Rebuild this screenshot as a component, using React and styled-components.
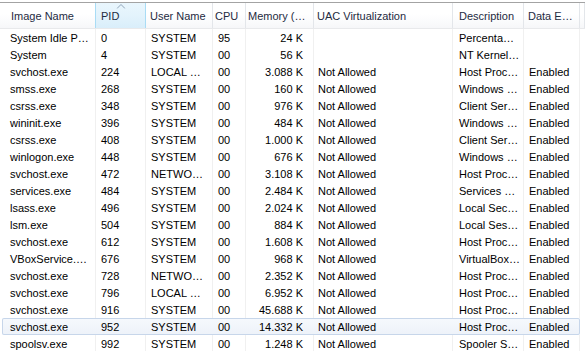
import React from "react";
import styled, { createGlobalStyle } from "styled-components";

const Global = createGlobalStyle`
  html, body { margin: 0; padding: 0; background: #fff; }
  body { font-family: "Liberation Sans", Arial, sans-serif; }
`;

const COLS = "96px 50px 67px 33px 68px 139px 71px 56px 1fr";

const Frame = styled.div`
  width: 585px;
  height: 351px;
  overflow: hidden;
  padding-top: 2px;
  box-sizing: border-box;
  background: #fff;
`;

const List = styled.div`
  border-top: 1px solid #a3a3a3;
  display: flex;
  flex-direction: column;
`;

const HeaderRow = styled.div`
  display: grid;
  grid-template-columns: ${COLS};
  height: 26px;
  background: linear-gradient(#ffffff 0%, #ffffff 45%, #f6f7f9 100%);
  border-bottom: 1px solid #e8e9eb;
  box-sizing: border-box;
`;

const HeaderCell = styled.div`
  position: relative;
  display: flex;
  align-items: center;
  padding-left: ${(p) => p.$pad ?? 5}px;
  font-size: 11px;
  color: #1e2b3f;
  white-space: nowrap;
  overflow: hidden;
  border-right: 1px solid ${(p) => (p.$sorted ? "#a9dcf5" : "#e3e6ea")};
  background: ${(p) =>
    p.$sorted ? "linear-gradient(#e9f6fd 0%, #e3f3fc 50%, #d9eefa 100%)" : "transparent"};
  ${(p) => (p.$sorted ? "margin-left: -1px; border-left: 1px solid #a9dcf5;" : "")}
`;

const SortArrow = styled.svg`
  position: absolute;
  top: 1px;
  left: 50%;
  transform: translateX(-50%);
`;

const Row = styled.div`
  display: grid;
  grid-template-columns: ${COLS};
  height: 17px;
  ${(p) =>
    p.$focused
      ? `
    background: linear-gradient(#f6f9fd, #edf2f9);
    box-shadow: inset 0 0 0 1px #c7d6ea;
    border-radius: 2px;
    margin: 0 5px 0 2px;
    grid-template-columns: 94px 50px 67px 33px 68px 139px 71px 56px 1fr;
  `
      : ""}
`;

const Cell = styled.div`
  display: flex;
  align-items: center;
  justify-content: ${(p) => (p.$right ? "flex-end" : "flex-start")};
  padding-left: ${(p) => (p.$right ? 0 : p.$pad ?? 5)}px;
  padding-right: ${(p) => (p.$right ? 10 : 0)}px;
  font-size: 11px;
  color: #000;
  white-space: nowrap;
  overflow: hidden;
  border-right: 1px solid ${(p) => (p.$focused ? "transparent" : "#f0f0f0")};
`;

const headers = [
  { t: "Image Name", pad: 11 },
  { t: "PID", pad: 5, sorted: true },
  { t: "User Name", pad: 4 },
  { t: "CPU", pad: 2 },
  { t: "Memory (…", pad: 2 },
  { t: "UAC Virtualization", pad: 3 },
  { t: "Description", pad: 6 },
  { t: "Data E…", pad: 4 },
  { t: "", pad: 0 },
];

const rows = [
  ["System Idle P…", "0", "SYSTEM", "95", "24 K", "", "Percenta…", ""],
  ["System", "4", "SYSTEM", "00", "56 K", "", "NT Kernel…", ""],
  ["svchost.exe", "224", "LOCAL …", "00", "3.088 K", "Not Allowed", "Host Proc…", "Enabled"],
  ["smss.exe", "268", "SYSTEM", "00", "160 K", "Not Allowed", "Windows …", "Enabled"],
  ["csrss.exe", "348", "SYSTEM", "00", "976 K", "Not Allowed", "Client Ser…", "Enabled"],
  ["wininit.exe", "396", "SYSTEM", "00", "484 K", "Not Allowed", "Windows …", "Enabled"],
  ["csrss.exe", "408", "SYSTEM", "00", "1.000 K", "Not Allowed", "Client Ser…", "Enabled"],
  ["winlogon.exe", "448", "SYSTEM", "00", "676 K", "Not Allowed", "Windows …", "Enabled"],
  ["svchost.exe", "472", "NETWO…", "00", "3.108 K", "Not Allowed", "Host Proc…", "Enabled"],
  ["services.exe", "484", "SYSTEM", "00", "2.484 K", "Not Allowed", "Services …", "Enabled"],
  ["lsass.exe", "496", "SYSTEM", "00", "2.024 K", "Not Allowed", "Local Sec…", "Enabled"],
  ["lsm.exe", "504", "SYSTEM", "00", "884 K", "Not Allowed", "Local Ses…", "Enabled"],
  ["svchost.exe", "612", "SYSTEM", "00", "1.608 K", "Not Allowed", "Host Proc…", "Enabled"],
  ["VBoxService.…", "676", "SYSTEM", "00", "968 K", "Not Allowed", "VirtualBox…", "Enabled"],
  ["svchost.exe", "728", "NETWO…", "00", "2.352 K", "Not Allowed", "Host Proc…", "Enabled"],
  ["svchost.exe", "796", "LOCAL …", "00", "6.952 K", "Not Allowed", "Host Proc…", "Enabled"],
  ["svchost.exe", "916", "SYSTEM", "00", "45.688 K", "Not Allowed", "Host Proc…", "Enabled"],
  ["svchost.exe", "952", "SYSTEM", "00", "14.332 K", "Not Allowed", "Host Proc…", "Enabled"],
  ["spoolsv.exe", "992", "SYSTEM", "00", "1.248 K", "Not Allowed", "Spooler S…", "Enabled"],
];

const cellPad = [10, 5, 5, 5, 0, 4, 6, 5, 0];

export default function App() {
  return (
    <>
      <Global />
      <Frame>
        <List>
          <HeaderRow>
            {headers.map((h, i) => (
              <HeaderCell key={i} $pad={h.pad} $sorted={h.sorted}>
                {h.sorted && (
                  <SortArrow width="9" height="5" viewBox="0 0 9 5">
                    <path d="M0.5 4.5 L4.5 0.5 L8.5 4.5" fill="none" stroke="#8fa3b8" strokeWidth="1" />
                  </SortArrow>
                )}
                {h.t}
              </HeaderCell>
            ))}
          </HeaderRow>
          {rows.map((r, ri) => {
            const focused = ri === 17;
            return (
              <Row key={ri} $focused={focused}>
                {r.map((c, ci) => (
                  <Cell
                    key={ci}
                    $right={ci === 4}
                    $pad={focused && ci === 0 ? 8 : cellPad[ci]}
                    $focused={focused}
                  >
                    {c}
                  </Cell>
                ))}
                <Cell $focused={focused} />
              </Row>
            );
          })}
        </List>
      </Frame>
    </>
  );
}
